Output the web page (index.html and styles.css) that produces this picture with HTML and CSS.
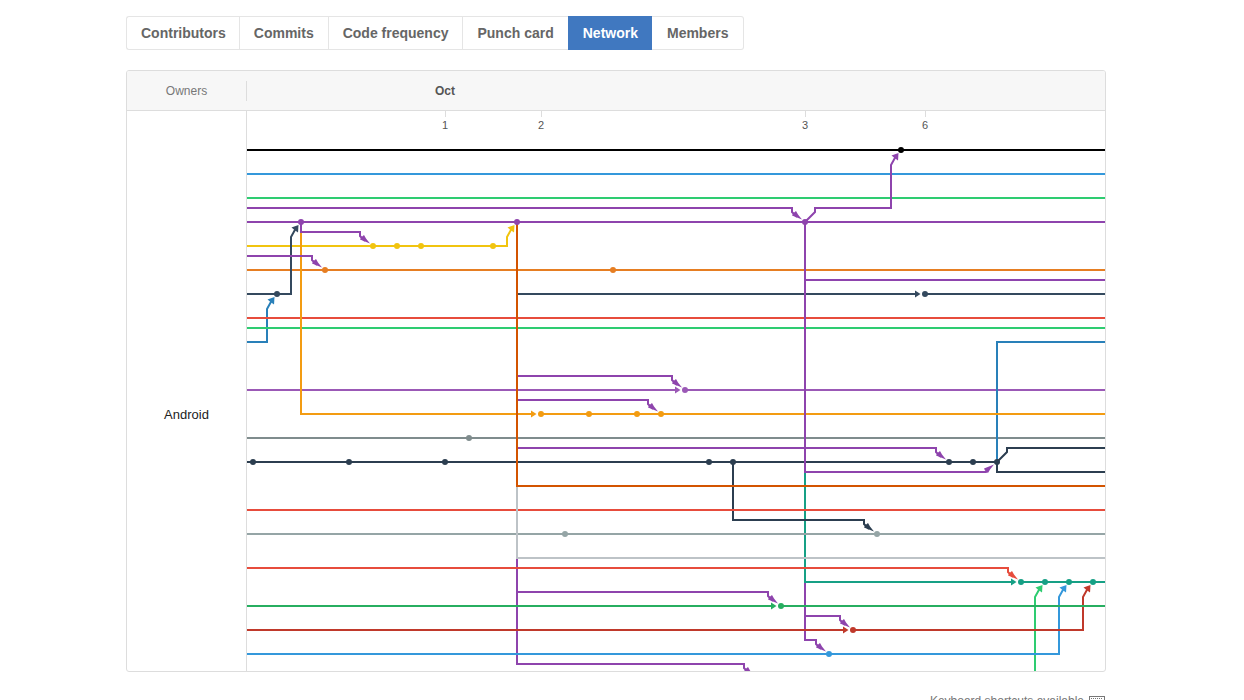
FILE: index.html
```html
<!DOCTYPE html>
<html lang="en">
<head>
<meta charset="utf-8">
<title>Network</title>
<link rel="stylesheet" href="styles.css">
</head>
<body>
<main class="page">
  <nav class="tabs" aria-label="Graphs">
    <a class="tab" href="#contributors">Contributors</a>
    <a class="tab" href="#commits">Commits</a>
    <a class="tab" href="#frequency">Code frequency</a>
    <a class="tab" href="#punch">Punch card</a>
    <a class="tab selected" href="#network" aria-current="page">Network</a>
    <a class="tab" href="#members">Members</a>
  </nav>

  <section class="network">
    <header class="network-head">
      <div class="owners-title">Owners</div>
      <svg class="months" height="39" role="img" aria-label="Months"><text class="month" x="198" y="24">Oct</text></svg>
    </header>
    <div class="network-body">
      <div class="owner">Android</div>
      <svg class="graph" height="560" viewBox="247 111 858 560" preserveAspectRatio="xMinYMin slice" role="img" aria-label="Commit network">
        <defs>
          <path id="right" d="M-4.500 0L-10 -3.5V3.5Z"/>
          <path id="down" d="M-3 -2.5L-13 -6.5L-12 -8.500L-9 -11L-7 -7.500Z"/>
          <path id="rise" d="M-3 2.5L-13 6.5L-12 8.500L-9 11L-7 7.500Z"/>
          <path id="up" d="M-2.5 3L-9.500 5.500L-6.5 8L-3 10.5Z"/>
          <circle id="dot" r="3"/>
        </defs>

        <g class="ticks">
          <path d="M445.500 111v6M541.500 111v6M805.500 111v6M925.500 111v6"/>
          <text x="445" y="129">1</text><text x="541" y="129">2</text><text x="805" y="129">3</text><text x="925" y="129">6</text>
        </g>

        <g class="lines">
          <path class="amethyst" d="M517 558V664H744V668L748 672M517 592H768V596L773 601"/>
          <path class="amethyst" d="M805 582V640H816V644L821 649M805 616H840V620L845 625"/>
          <path class="emerald" d="M1035 671V597L1040 588"/>
          <path class="sky" d="M247 654H1059V597L1064 588"/>
          <path class="brick" d="M247 630H844M853 630H1083V597L1088 588"/>
          <path class="forest" d="M247 606H772M781 606H1105"/>
          <path class="teal" d="M805 472V582H1012M1021 582H1105"/>
          <path class="red" d="M247 568H1008V572L1013 577"/>
          <path class="ash" d="M247 534H1105"/>
          <path class="ink" d="M733 462V520H864V524L869 529"/>
          <path class="red" d="M247 510H1105"/>
          <path class="silver" d="M517 486V558H1105"/>
          <path class="ink" d="M247 462H997L1007 452V448H1105M997 462V472H1105"/>
          <path class="slate-gray" d="M247 438H1105"/>
          <path class="amethyst" d="M517 448H936V452L941 457M517 400H648V404L653 409M517 376H672V380L677 385"/>
          <path class="lilac" d="M247 390H676M685 390H1105"/>
          <path class="blue" d="M997 462V342H1105M247 342H267V309L272 300"/>
          <path class="emerald" d="M247 328H1105M247 198H1105"/>
          <path class="red" d="M247 318H1105"/>
          <path class="slate" d="M517 294H916M925 294H1105"/>
          <path class="carrot" d="M247 270H1105"/>
          <path class="yellow" d="M247 246H507V237L512 228"/>
          <path class="orange" d="M301 222V414H532M541 414H1105"/>
          <path class="slate" d="M247 294H291V237L296 228"/>
          <path class="pumpkin" d="M517 222V486H1105"/>
          <path class="sky" d="M247 174H1105"/>
          <path class="amethyst" d="M247 256H312V260L317 265M301 222V232H360V236L365 241"/>
          <path class="amethyst" d="M805 222V472H986L989 469M805 280H1105M247 222H1105"/>
          <path class="amethyst" d="M247 208H792V212L797 217M805 222L815 212V208H891V165L896 156"/>
          <path class="black" d="M247 150H1105"/>
        </g>

        <g class="amethyst">
          <use href="#dot" x="301" y="222"/><use href="#dot" x="517" y="222"/><use href="#dot" x="805" y="222"/>
          <use href="#up" x="901" y="150"/><use href="#down" x="805" y="222"/><use href="#down" x="373" y="246"/>
          <use href="#down" x="325" y="270"/><use href="#down" x="685" y="390"/><use href="#down" x="661" y="414"/>
          <use href="#down" x="949" y="462"/><use href="#rise" x="997" y="462"/><use href="#down" x="781" y="606"/>
          <use href="#down" x="853" y="630"/><use href="#down" x="829" y="654"/><use href="#down" x="757" y="678"/>
        </g>
        <use class="black" href="#dot" x="901" y="150"/>
        <g class="yellow">
          <use href="#dot" x="373" y="246"/><use href="#dot" x="397" y="246"/><use href="#dot" x="421" y="246"/><use href="#dot" x="493" y="246"/>
          <use href="#up" x="517" y="222"/>
        </g>
        <g class="carrot"><use href="#dot" x="325" y="270"/><use href="#dot" x="613" y="270"/></g>
        <g class="slate">
          <use href="#dot" x="277" y="294"/><use href="#up" x="301" y="222"/><use href="#dot" x="925" y="294"/><use href="#right" x="925" y="294"/>
        </g>
        <use class="blue" href="#up" x="277" y="294"/>
        <g class="lilac"><use href="#dot" x="685" y="390"/><use href="#right" x="685" y="390"/></g>
        <g class="orange">
          <use href="#right" x="541" y="414"/><use href="#dot" x="541" y="414"/><use href="#dot" x="589" y="414"/>
          <use href="#dot" x="637" y="414"/><use href="#dot" x="661" y="414"/>
        </g>
        <use class="slate-gray" href="#dot" x="469" y="438"/>
        <g class="ink">
          <use href="#dot" x="253" y="462"/><use href="#dot" x="349" y="462"/><use href="#dot" x="445" y="462"/>
          <use href="#dot" x="709" y="462"/><use href="#dot" x="733" y="462"/><use href="#dot" x="949" y="462"/>
          <use href="#dot" x="973" y="462"/><use href="#dot" x="997" y="462"/><use href="#down" x="877" y="534"/>
        </g>
        <g class="ash"><use href="#dot" x="565" y="534"/><use href="#dot" x="877" y="534"/></g>
        <g class="teal">
          <use href="#right" x="1021" y="582"/><use href="#dot" x="1021" y="582"/><use href="#dot" x="1045" y="582"/>
          <use href="#dot" x="1069" y="582"/><use href="#dot" x="1093" y="582"/>
        </g>
        <use class="red" href="#down" x="1021" y="582"/>
        <use class="emerald" href="#up" x="1045" y="582"/>
        <g class="sky"><use href="#up" x="1069" y="582"/><use href="#dot" x="829" y="654"/></g>
        <g class="forest"><use href="#right" x="781" y="606"/><use href="#dot" x="781" y="606"/></g>
        <g class="brick">
          <use href="#up" x="1093" y="582"/><use href="#right" x="853" y="630"/><use href="#dot" x="853" y="630"/>
        </g>
      </svg>
    </div>
  </section>

  <footer class="shortcuts">
    <a href="#shortcuts">Keyboard shortcuts available
      <svg class="keyboard" width="16" height="10" aria-hidden="true">
        <rect x="0.5" y="0.5" width="15" height="9"/>
        <path d="M2 2.500H14M2 4.500H14M4 7.500H12"/>
      </svg>
    </a>
  </footer>
</main>
</body>
</html>
```

FILE: styles.css
```css
* {
  box-sizing: border-box;
}

body {
  margin: 0;
  height: 100vh;
  overflow: hidden;
  background: #fff;
  color: #333;
  font-family: "Liberation Sans", Arial, sans-serif;
  font-size: 13px;
}

.page {
  padding: 16px 12px 0 0;
  max-width: 992px;
  margin: 0 auto;
}

.tabs {
  display: flex;
  width: max-content;
  margin-bottom: 20px;
}

.tab {
  padding: 0 14px;
  border: 1px solid #e5e5e5;
  border-right-width: 0;
  color: #666;
  font-size: 14px;
  font-weight: bold;
  line-height: 32px;
  text-decoration: none;
}

.tab:first-child {
  padding: 0 13px 0 14px;
  border-radius: 3px 0 0 3px;
}

.tab:last-child {
  border-left-width: 0;
  border-right-width: 1px;
  padding: 0 15px;
  border-radius: 0 3px 3px 0;
}

.tab.selected {
  border-color: #4078c0;
  background: #4078c0;
  color: #fff;
}

.network {
  overflow: hidden;
  border: 1px solid #ddd;
  border-radius: 3px;
}

.network-head,
.network-body {
  display: grid;
  grid-template-columns: 120px minmax(0, 1fr);
}

.network-head {
  align-items: center;
  border-bottom: 1px solid #ddd;
  background: #f7f7f7;
}

.owners-title {
  border-right: 1px solid #ddd;
  color: #777;
  font-size: 12px;
  line-height: 20px;
  text-align: center;
}

.owner {
  padding-top: 294px;
  border-right: 1px solid #ddd;
  color: #222;
  line-height: 20px;
  text-align: center;
}

.months,
.graph {
  display: block;
  width: 100%;
}

.month {
  fill: #555;
  font-size: 12px;
  font-weight: bold;
  text-anchor: middle;
}

.ticks path {
  stroke: #ddd;
}

.ticks text {
  fill: #555;
  font-size: 11px;
  text-anchor: middle;
}

.lines path {
  fill: none;
  stroke: currentColor;
  stroke-width: 2;
}

.graph {
  fill: currentColor;
}

.black { color: #000; }
.sky { color: #3498db; }
.blue { color: #2980b9; }
.emerald { color: #2ecc71; }
.forest { color: #27ae60; }
.teal { color: #16a085; }
.amethyst { color: #8e44ad; }
.lilac { color: #9b59b6; }
.yellow { color: #f1c40f; }
.orange { color: #f39c12; }
.carrot { color: #e67e22; }
.pumpkin { color: #d35400; }
.red { color: #e74c3c; }
.brick { color: #c0392b; }
.slate { color: #34495e; }
.ink { color: #2c3e50; }
.slate-gray { color: #7f8c8d; }
.ash { color: #95a5a6; }
.silver { color: #bdc3c7; }

.shortcuts {
  margin-top: 19px;
  font-size: 12px;
  line-height: 20px;
}

.shortcuts a {
  display: flex;
  justify-content: flex-end;
  align-items: center;
  gap: 5px;
  padding-right: 1px;
  color: #777;
  text-decoration: none;
}

.keyboard {
  fill: none;
  stroke: #777;
}

.keyboard path {
  stroke-dasharray: 1 1;
}
```
